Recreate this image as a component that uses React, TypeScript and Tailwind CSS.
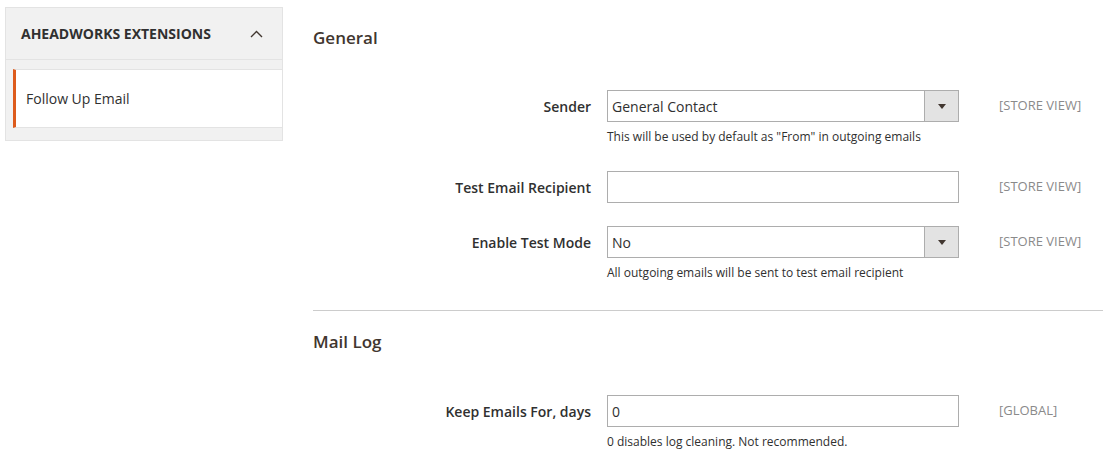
import { ReactNode } from 'react';

const font = { fontFamily: '"Open Sans", "Noto Sans", sans-serif' };

function App() {
  return (
    <div className="min-h-screen bg-white text-[#303030] flex" style={font}>
      <Sidebar />
      <main className="flex-1 ml-[30px] pt-[27px]">
        <h2 className="text-[17px] leading-[22px] font-semibold text-[#41362f]">General</h2>

        <FieldRow
          className="mt-[41px]"
          label="Sender"
          scope="[STORE VIEW]"
          note='This will be used by default as "From" in outgoing emails'
        >
          <SelectBox value="General Contact" />
        </FieldRow>

        <FieldRow className="mt-[26px]" label="Test Email Recipient" scope="[STORE VIEW]">
          <TextBox value="" />
        </FieldRow>

        <FieldRow
          className="mt-[23px]"
          label="Enable Test Mode"
          scope="[STORE VIEW]"
          note="All outgoing emails will be sent to test email recipient"
        >
          <SelectBox value="No" />
        </FieldRow>

        <div className="mt-[29px] border-t border-[#cccccc]" />

        <h2 className="mt-[20px] text-[17px] leading-[22px] font-semibold text-[#41362f]">Mail Log</h2>

        <FieldRow
          className="mt-[42px]"
          label="Keep Emails For, days"
          scope="[GLOBAL]"
          note="0 disables log cleaning. Not recommended."
        >
          <TextBox value="0" />
        </FieldRow>
      </main>
    </div>
  );
}

function Sidebar() {
  return (
    <aside className="ml-[5px] mt-[7px] w-[278px] self-start border border-[#e3e3e3] bg-[#f1f1f1]">
      <div className="h-[52px] pl-[15px] pr-[19px] flex items-center justify-between border-b border-[#e3e3e3]">
        <span className="text-[14px] font-bold text-[#303030]">AHEADWORKS EXTENSIONS</span>
        <svg width="13" height="8" viewBox="0 0 13 8" fill="none">
          <path d="M1 7 L6.5 1.5 L12 7" stroke="#41362f" strokeWidth="1.4" />
        </svg>
      </div>
      <div className="pl-[7px] pt-[9px] pb-[12px]">
        <div className="h-[59px] bg-white border-y border-[#e3e3e3] border-l-[3px] border-l-[#dd5b1c] pl-[10px] flex items-center">
          <span className="text-[14px] text-[#303030]">Follow Up Email</span>
        </div>
      </div>
    </aside>
  );
}

function FieldRow({
  label,
  scope,
  note,
  className,
  children,
}: {
  label: string;
  scope: string;
  note?: string;
  className?: string;
  children: ReactNode;
}) {
  return (
    <div className={`flex items-start ${className ?? ''}`}>
      <div className="w-[278px] h-[32px] flex items-center justify-end text-[14px] font-semibold text-[#303030]">
        {label}
      </div>
      <div className="ml-[16px] w-[352px]">
        {children}
        {note && <p className="mt-[7px] text-[12px] leading-[16px] text-[#303030]">{note}</p>}
      </div>
      <div className="ml-[40px] h-[32px] flex items-center text-[13px] text-[#8a8a8a]">{scope}</div>
    </div>
  );
}

function TextBox({ value }: { value: string }) {
  return (
    <div className="h-[32px] border border-[#adadad] bg-white flex items-center pl-[4px] text-[14px] text-[#303030]">
      {value}
    </div>
  );
}

function SelectBox({ value }: { value: string }) {
  return (
    <div className="h-[32px] border border-[#adadad] bg-white flex items-stretch text-[14px] text-[#303030]">
      <div className="flex-1 flex items-center pl-[4px]">{value}</div>
      <div className="w-[34px] bg-[#e3e3e3] border-l border-[#adadad] flex items-center justify-center">
        <svg width="8" height="5" viewBox="0 0 8 5">
          <path d="M0 0 L8 0 L4 5 Z" fill="#41362f" />
        </svg>
      </div>
    </div>
  );
}

export default App;
